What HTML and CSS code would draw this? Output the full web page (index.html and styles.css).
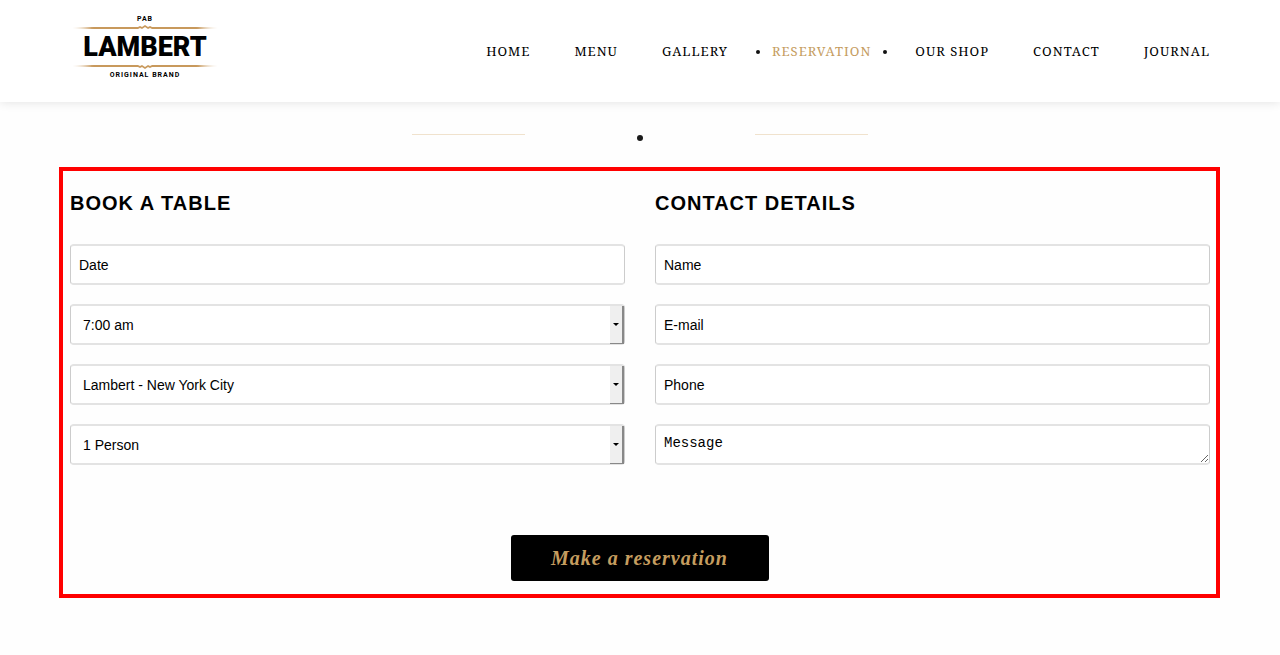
FILE: index.html
```html
<!DOCTYPE html>
<html lang="en">
<head>
<meta charset="utf-8">
<title>Lambert – Reservation</title>
<meta name="viewport" content="width=device-width, initial-scale=1">
<link rel="stylesheet" href="styles.css">
</head>
<body>
<header class="site-header">
  <a class="logo" href="#">
    <span class="logo-small">PAB</span>
    <svg class="logo-rule" viewBox="0 0 146 5" aria-hidden="true">
      <defs>
        <linearGradient id="gold" x1="0" x2="1" y1="0" y2="0">
          <stop offset="0" stop-color="#c8995c" stop-opacity=".2"/>
          <stop offset=".15" stop-color="#c8995c"/>
          <stop offset=".85" stop-color="#c8995c"/>
          <stop offset="1" stop-color="#c8995c" stop-opacity=".2"/>
        </linearGradient>
      </defs>
      <path fill="url(#gold)" d="M0 3 20 2H66l2-1 2 1 3-2 3 2 2-1 2 1h46l20 1-20 1H80l-2-1-2 1-3-2-3 2-2-1-2 1H20z"/>
    </svg>
    <span class="logo-name">LAMBERT</span>
    <svg class="logo-rule" viewBox="0 0 146 5" aria-hidden="true">
      <path fill="url(#gold)" d="M0 2 20 1H66l2 1 2-1 3 2 3-2 2 1 2-1h46l20 1-20 1H80l-2 1-2-1-3 2-3-2-2 1-2-1H20z"/>
    </svg>
    <span class="logo-small">ORIGINAL BRAND</span>
  </a>
  <nav class="site-nav">
    <a href="#">HOME</a>
    <a href="#">MENU</a>
    <a href="#">GALLERY</a>
    <a class="active" href="#" aria-current="page">RESERVATION</a>
    <a href="#">OUR SHOP</a>
    <a href="#">CONTACT</a>
    <a href="#">JOURNAL</a>
  </nav>
</header>
<main>
  <div class="divider"><span class="line"></span><span class="dot"></span><span class="line"></span></div>
  <form class="reservation">
    <div class="columns">
      <section class="column">
        <h2>BOOK A TABLE</h2>
        <input class="field" type="text" placeholder="Date" aria-label="Date">
        <div class="picker">
          <select class="field" aria-label="Time"><option>7:00 am</option></select>
          <span class="picker-button"></span>
        </div>
        <div class="picker">
          <select class="field" aria-label="Location"><option>Lambert - New York City</option></select>
          <span class="picker-button"></span>
        </div>
        <div class="picker">
          <select class="field" aria-label="Guests"><option>1 Person</option></select>
          <span class="picker-button"></span>
        </div>
      </section>
      <section class="column">
        <h2>CONTACT DETAILS</h2>
        <input class="field" type="text" placeholder="Name" aria-label="Name">
        <input class="field" type="email" placeholder="E-mail" aria-label="E-mail">
        <input class="field" type="tel" placeholder="Phone" aria-label="Phone">
        <textarea class="field message" placeholder="Message" aria-label="Message"></textarea>
      </section>
    </div>
    <button class="submit" type="button">Make a reservation</button>
  </form>
</main>
</body>
</html>
```
FILE: styles.css
```css
* { box-sizing: border-box; }

body {
  margin: 0;
  background: #fefefe;
  color: #000;
  font-family: "Liberation Sans", Arial, sans-serif;
}

a { color: inherit; text-decoration: none; }

.site-header {
  display: flex;
  justify-content: space-between;
  align-items: center;
  min-height: 102px;
  padding: 0 70px;
  background: #fff;
  box-shadow: 0 0 10px rgba(0, 0, 0, 0.12);
}

.logo {
  display: flex;
  flex-direction: column;
  align-items: center;
  width: 150px;
  padding-bottom: 8px;
}

.logo-small {
  font: 700 7px/8px Roboto, sans-serif;
  letter-spacing: 1px;
}

.logo-name {
  font: 900 27px/30px Roboto, sans-serif;
}

.logo-rule {
  display: block;
  width: 146px;
  height: 5px;
  margin: 2px 0;
}

.site-nav {
  display: flex;
  gap: 44px;
  font: 13px/20px "Noto Serif", "Liberation Serif", serif;
  letter-spacing: 1px;
}

.site-nav a { position: relative; }

.active { color: #c59d5f; }

.active::before,
.active::after {
  content: "";
  position: absolute;
  top: 9px;
  width: 4px;
  height: 4px;
  border-radius: 50%;
  background: #111;
}

.active::before { left: -16px; }
.active::after { right: -16px; }

.divider {
  display: flex;
  justify-content: center;
  gap: 112px;
  padding: 32px 0 26px;
}

.line {
  width: 113px;
  height: 1px;
  background: #f0e2cd;
}

.dot {
  width: 6px;
  height: 6px;
  margin-top: 1px;
  border-radius: 50%;
  background: #1a1a1a;
}

.reservation {
  display: flex;
  flex-direction: column;
  align-items: center;
  margin: 0 60px 0 59px;
  padding: 20px 6px 13px 7px;
  border: 4px solid #f00;
}

.columns {
  display: grid;
  grid-template-columns: 1fr 1fr;
  gap: 30px;
  width: 100%;
}

.column {
  display: flex;
  flex-direction: column;
  gap: 19px;
}

h2 {
  margin: 0 0 10px;
  font-size: 20px;
  line-height: 24px;
  letter-spacing: 1px;
}

.field {
  display: block;
  width: 100%;
  height: 41px;
  margin: 0;
  padding: 0 8px;
  border: solid;
  border-width: 2px 1px;
  border-color: #e3e3e3 #ccc;
  border-radius: 4px;
  background: #fff;
  color: #000;
  font: 14px/20px "Liberation Sans", Arial, sans-serif;
}

.field::placeholder { color: #000; opacity: 1; }

.picker { position: relative; }

.picker .field {
  appearance: none;
  padding: 0 20px 0 12px;
}

.picker-button {
  position: absolute;
  top: 2px;
  right: 1px;
  bottom: 1px;
  width: 14px;
  border: solid #888;
  border-width: 0 2px 1px 0;
  background: #efefef;
  pointer-events: none;
}

.picker-button::after {
  content: "";
  position: absolute;
  top: 17px;
  left: 3px;
  border: 3px solid transparent;
  border-top-color: #000;
  border-bottom: 0;
}

.message {
  padding-top: 7px;
  font: 14px/20px "Liberation Mono", "Courier New", monospace;
  resize: vertical;
  overflow: auto;
}

.submit {
  margin-top: 70px;
  padding: 11px 41px 11px 40px;
  border: 0;
  border-radius: 3px;
  background: #000;
  color: #c59d5f;
  font: italic 700 20px/24px "Monotype Corsiva", "Liberation Serif", serif;
  letter-spacing: 1px;
}
```
